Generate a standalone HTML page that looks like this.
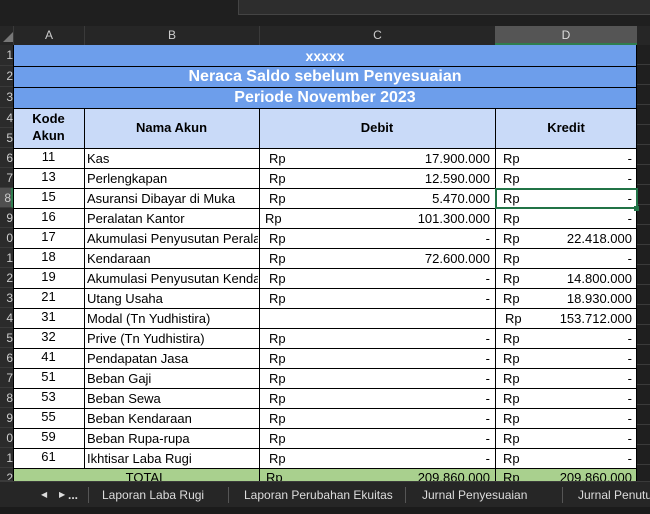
<!DOCTYPE html>
<html><head><meta charset="utf-8"><style>
*{margin:0;padding:0;box-sizing:border-box}
body{width:650px;height:514px;overflow:hidden;background:#1f1f1f;font-family:"Liberation Sans",Arial,sans-serif;position:relative}
.a{position:absolute}
.t{position:absolute;font-size:13px;color:#000;line-height:20px;white-space:nowrap}
.rh{position:absolute;left:0;width:13px;background:#2b2b2b;color:#ccc;font-size:12px;text-align:right;overflow:hidden;border-bottom:1px solid #3a3a3a}
.tab span{white-space:nowrap}
</style></head><body>
<div class="a" style="left:238px;top:0;width:412px;height:15px;background:#2d2d2d;border-left:1px solid #444;border-bottom:1px solid #444"></div>
<div class="a" style="left:0;top:26px;width:650px;height:19px;background:#262626"></div>
<div class="a" style="left:3px;top:32px;width:0;height:0;border-left:10px solid transparent;border-bottom:10px solid #777"></div>
<div class="a" style="left:13px;top:26px;width:71px;height:19px;color:#ccc;font-size:12px;text-align:center;line-height:19px;border-left:1px solid #3a3a3a">A</div>
<div class="a" style="left:84px;top:26px;width:175px;height:19px;color:#ccc;font-size:12px;text-align:center;line-height:19px;border-left:1px solid #3a3a3a">B</div>
<div class="a" style="left:259px;top:26px;width:236px;height:19px;color:#ccc;font-size:12px;text-align:center;line-height:19px;border-left:1px solid #3a3a3a">C</div>
<div class="a" style="left:495px;top:26px;width:142px;height:19px;color:#ddd;font-size:12px;text-align:center;line-height:18px;background:#555;border-bottom:2px solid #2f7d4f">D</div>
<div class="a" style="left:13px;top:45px;width:624px;height:436px;background:#fff"></div>
<div class="a" style="left:637px;top:45px;width:13px;height:436px;background:#1f1f1f;background-image:repeating-linear-gradient(to bottom,transparent 0 19px,#3a3a3a 19px 20px)"></div>
<div class="a" style="left:13px;top:45px;width:624px;height:63px;background:#6d9eeb"></div>
<div class="a" style="left:13px;top:66px;width:624px;height:1px;background:#000"></div>
<div class="a" style="left:13px;top:87px;width:624px;height:1px;background:#000"></div>
<div class="a" style="left:13px;top:45px;width:624px;height:21px;color:#fff;font-weight:bold;font-size:14px;text-align:center;line-height:22px">xxxxx</div>
<div class="a" style="left:13px;top:66px;width:624px;height:21px;color:#fff;font-weight:bold;font-size:16px;text-align:center;line-height:21px">Neraca Saldo sebelum Penyesuaian</div>
<div class="a" style="left:13px;top:87px;width:624px;height:21px;color:#fff;font-weight:bold;font-size:16px;text-align:center;line-height:21px">Periode November 2023</div>
<div class="a" style="left:13px;top:108px;width:624px;height:40px;background:#c9daf8;border-top:1px solid #000"></div>
<div class="a" style="left:13px;top:110px;width:71px;text-align:center;font-weight:bold;font-size:13px;line-height:17px">Kode<br>Akun</div>
<div class="a" style="left:84px;top:108px;width:175px;height:40px;text-align:center;font-weight:bold;font-size:13px;line-height:40px">Nama Akun</div>
<div class="a" style="left:259px;top:108px;width:236px;height:40px;text-align:center;font-weight:bold;font-size:13px;line-height:40px">Debit</div>
<div class="a" style="left:495px;top:108px;width:142px;height:40px;text-align:center;font-weight:bold;font-size:13px;line-height:40px">Kredit</div>
<div class="a" style="left:13px;top:468px;width:624px;height:13px;background:#a9d08e"></div>
<div class="a" style="left:13px;top:148px;width:624px;height:321px;background-image:repeating-linear-gradient(to bottom,#000 0 1px,transparent 1px 20px)"></div>
<div class="a" style="left:84px;top:108px;width:1px;height:360px;background:#000"></div>
<div class="a" style="left:259px;top:108px;width:1px;height:373px;background:#000"></div>
<div class="a" style="left:495px;top:108px;width:1px;height:373px;background:#000"></div>
<div class="a" style="left:636px;top:45px;width:1px;height:436px;background:#000"></div>
<div class="a" style="left:13px;top:45px;width:1px;height:436px;background:#000"></div>
<div id="rows"></div>
<div class="rh" style="top:45px;height:21px;line-height:21px">1</div>
<div class="rh" style="top:66px;height:21px;line-height:21px">2</div>
<div class="rh" style="top:87px;height:21px;line-height:21px">3</div>
<div class="rh" style="top:108px;height:20px;line-height:20px">4</div>
<div class="rh" style="top:128px;height:20px;line-height:20px">5</div>
<div class="rh" style="top:148px;height:20px;line-height:20px">6</div>
<div class="rh" style="top:168px;height:20px;line-height:20px">7</div>
<div class="rh" style="top:188px;height:20px;line-height:20px;background:#505050;border-right:2px solid #2f7d4f">8</div>
<div class="rh" style="top:208px;height:20px;line-height:20px">9</div>
<div class="rh" style="top:228px;height:20px;line-height:20px">0</div>
<div class="rh" style="top:248px;height:20px;line-height:20px">1</div>
<div class="rh" style="top:268px;height:20px;line-height:20px">2</div>
<div class="rh" style="top:288px;height:20px;line-height:20px">3</div>
<div class="rh" style="top:308px;height:20px;line-height:20px">4</div>
<div class="rh" style="top:328px;height:20px;line-height:20px">5</div>
<div class="rh" style="top:348px;height:20px;line-height:20px">6</div>
<div class="rh" style="top:368px;height:20px;line-height:20px">7</div>
<div class="rh" style="top:388px;height:20px;line-height:20px">8</div>
<div class="rh" style="top:408px;height:20px;line-height:20px">9</div>
<div class="rh" style="top:428px;height:20px;line-height:20px">0</div>
<div class="rh" style="top:448px;height:20px;line-height:20px">1</div>
<div class="rh" style="top:468px;height:13px;line-height:20px">2</div>

<div class="t" style="left:13px;top:468px;width:246px;text-align:center;padding-left:20px">TOTAL</div>
<div class="t" style="left:266px;top:468px">Rp</div>
<div class="t" style="left:300px;top:468px;width:190px;text-align:right">209.860.000</div>
<div class="t" style="left:503px;top:468px">Rp</div>
<div class="t" style="left:520px;top:468px;width:112px;text-align:right">209.860.000</div>
<div class="a" style="left:495px;top:188px;width:143px;height:21px;border:2px solid #217346"></div>
<div class="a" style="left:634px;top:206px;width:5px;height:5px;background:#217346"></div>
<div class="a tab" style="left:0;top:481px;width:650px;height:26px;background:#262626;border-top:1px solid #3a3a3a;color:#ddd;font-size:12px;line-height:26px;overflow:hidden">
<span class="a" style="left:41px;font-size:8px">&#9664;</span>
<span class="a" style="left:59px;font-size:8px">&#9654;</span>
<span class="a" style="left:68px;font-weight:bold">...</span>
<span class="a" style="left:88px;top:5px;width:1px;height:16px;background:#555"></span>
<span class="a" style="left:102px">Laporan Laba Rugi</span>
<span class="a" style="left:228px;top:5px;width:1px;height:16px;background:#555"></span>
<span class="a" style="left:244px">Laporan Perubahan Ekuitas</span>
<span class="a" style="left:405px;top:5px;width:1px;height:16px;background:#555"></span>
<span class="a" style="left:422px">Jurnal Penyesuaian</span>
<span class="a" style="left:562px;top:5px;width:1px;height:16px;background:#555"></span>
<span class="a" style="left:578px">Jurnal Penutup</span>
</div>
<div class="a" style="left:0;top:507px;width:650px;height:7px;background:#1b1b1b"></div>
<script>
var d=[["11","Kas","Rp","17.900.000","Rp","-"],["13","Perlengkapan","Rp","12.590.000","Rp","-"],["15","Asuransi Dibayar di Muka","Rp","5.470.000","Rp","-"],["16","Peralatan Kantor","Rp","101.300.000","Rp","-"],["17","Akumulasi Penyusutan Peralatan","Rp","-","Rp","22.418.000"],["18","Kendaraan","Rp","72.600.000","Rp","-"],["19","Akumulasi Penyusutan Kendaraan","Rp","-","Rp","14.800.000"],["21","Utang Usaha","Rp","-","Rp","18.930.000"],["31","Modal (Tn Yudhistira)","","","Rp","153.712.000"],["32","Prive (Tn Yudhistira)","Rp","-","Rp","-"],["41","Pendapatan Jasa","Rp","-","Rp","-"],["51","Beban Gaji","Rp","-","Rp","-"],["53","Beban Sewa","Rp","-","Rp","-"],["55","Beban Kendaraan","Rp","-","Rp","-"],["59","Beban Rupa-rupa","Rp","-","Rp","-"],["61","Ikhtisar Laba Rugi","Rp","-","Rp","-"]];
var h="";d.forEach(function(r,i){var y=148+20*i+1;
h+='<div class="t" style="left:13px;top:'+(y-2)+'px;width:71px;text-align:center">'+r[0]+'</div>';
h+='<div class="t" style="left:87px;top:'+y+'px;width:171px;overflow:hidden">'+r[1]+'</div>';
h+='<div class="t" style="left:'+(i==3?265:269)+'px;top:'+y+'px">'+r[2]+'</div>';
h+='<div class="t" style="left:300px;top:'+y+'px;width:190px;text-align:right">'+r[3]+'</div>';
h+='<div class="t" style="left:'+(i==8?505:503)+'px;top:'+y+'px">'+r[4]+'</div>';
h+='<div class="t" style="left:520px;top:'+y+'px;width:112px;text-align:right">'+r[5]+'</div>';});
document.getElementById("rows").innerHTML=h;
</script>
</body></html>
